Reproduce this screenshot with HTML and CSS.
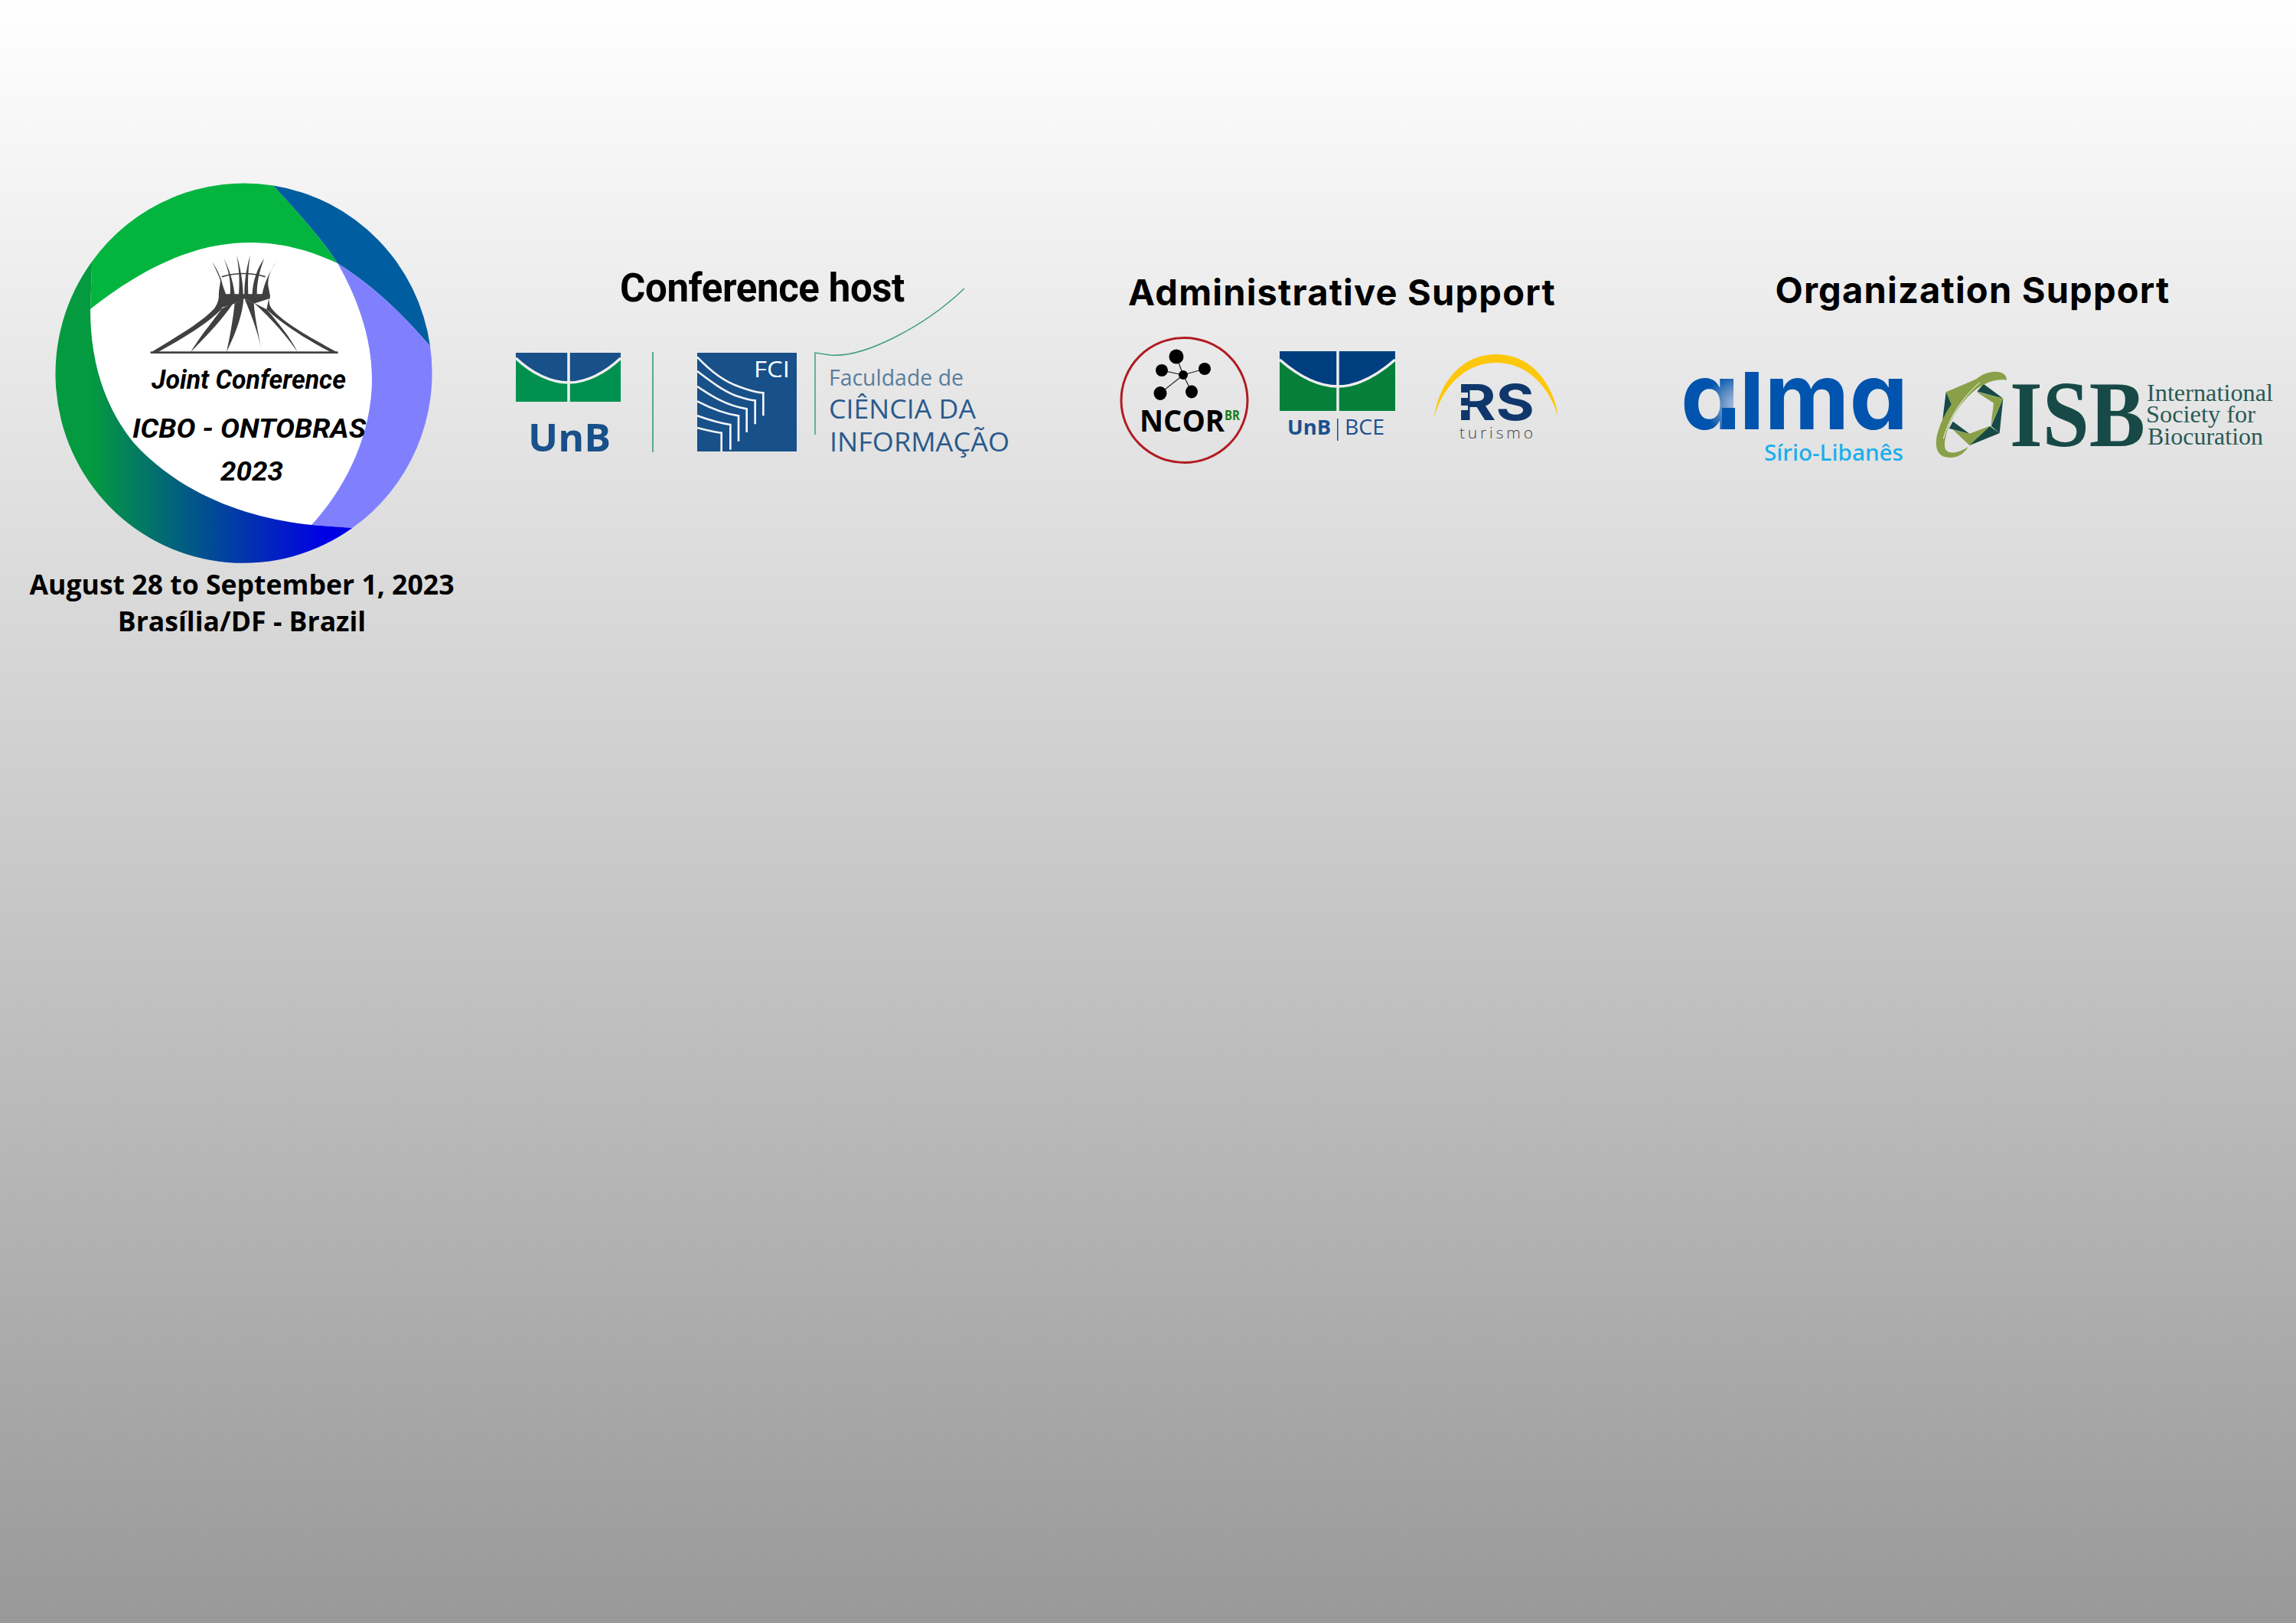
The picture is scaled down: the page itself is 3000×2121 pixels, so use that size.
FILE: index.html
```html
<!DOCTYPE html>
<html lang="en">

<head>
    <meta charset="UTF-8">
    <meta name="viewport" content="width=device-width, initial-scale=1.0">
    <title>ICBO - ONTOBRAS 2023</title>
    <link rel="stylesheet" href="styles.css">
</head>

<body>
    <main class="page">
        <section class="col col-event">
            <svg class="emblem" viewBox="70 235 500 500" width="500" height="500">
                <defs>
                    <linearGradient id="ringFade" gradientUnits="userSpaceOnUse" x1="118" y1="0" x2="425" y2="0">
                        <stop offset="0" stop-color="#049a3f" />
                        <stop offset="1" stop-color="#0000e6" />
                    </linearGradient>
                </defs>
                <circle class="fill-white" cx="319" cy="487" r="235" />
                <path class="ring-green" d="M118 404 L120.2 341.7 A245.5 247.5 0 0 1 357.2 242.5 C380 268 420 310 441 344 C400 325 365 317 326 317 C250 317 180 355 118 404 Z" />
                <path class="ring-blue" d="M357.2 242.5 A245.5 247.5 0 0 1 562 452 C525 410 490 375 441 344 C420 310 380 268 357.2 242.5 Z" />
                <path class="ring-violet" d="M441 344 C490 375 525 410 562 452 A245.5 247.5 0 0 1 460.3 690 L407 686 C450 640 486 570 486 495 C486 440 465 385 441 344 Z" />
                <path class="ring-fade" d="M120.2 341.7 A245.5 247.5 0 0 0 460.3 690 L407 686 C330 678 240 650 175 579 C135 530 118 470 118 404 Z" />

                <!-- catedral -->
                <g class="cathedral" transform="translate(190 325) scale(.3333)">
                    <rect x="20" y="403" width="735" height="8" />
                    <path d="M262 52 C285 88 298 118 302 140 C308 160 316 175 320 195 L288 195 C286 165 292 150 294 125 C288 105 275 80 262 52 Z" />
                    <path d="M306 36 C325 72 343 120 350 180 L332 180 C336 130 327 85 306 36 Z" />
                    <path d="M358 25 C370 70 382 120 383 180 L366 180 C371 120 366 75 358 25 Z" />
                    <path d="M411 25 C403 75 401 120 403 180 L388 180 C388 120 398 70 411 25 Z" />
                    <path d="M466 38 C447 85 437 130 437 180 L419 180 C420 125 440 75 466 38 Z" />
                    <path d="M512 52 C485 90 478 125 482 150 C486 165 488 180 488 195 L456 195 C460 160 470 120 512 52 Z" />
                    <path class="cathedral-ring" d="M300 110 Q385 85 470 110" />
                    <path d="M288 178 L488 178 L488 195 L425 215 L388 195 L350 215 L288 235 Z" />
                    <path d="M288 175 C290 190 285 215 270 235 C220 290 120 345 20 408 L45 408 C130 360 240 300 300 235 Z" />
                    <path d="M178 405 C240 340 300 280 345 212 L300 235 C260 290 210 350 178 405 Z" />
                    <path d="M318 405 C335 330 345 260 350 215 L385 195 C380 270 345 350 318 405 Z" />
                    <path d="M456 405 C445 340 420 270 388 195 L425 215 C430 280 445 340 456 405 Z" />
                    <path d="M596 405 C560 350 500 280 425 212 L475 238 C520 290 570 350 596 405 Z" />
                    <path d="M755 408 C640 345 540 290 495 235 C480 215 485 190 488 175 L475 238 C540 300 640 360 730 408 Z" />
                </g>

                <text class="emblem-text" x="198" y="508" textLength="254" lengthAdjust="spacingAndGlyphs">Joint Conference</text>
                <text class="emblem-text" x="173" y="571.5" textLength="305" lengthAdjust="spacingAndGlyphs">ICBO - ONTOBRAS</text>
                <text class="emblem-text" x="288" y="628" textLength="82" lengthAdjust="spacingAndGlyphs">2023</text>
            </svg>
            <p class="dates">August 28 to September 1, 2023<br>Brasília/DF - Brazil</p>
        </section>

        <section class="col col-host">
            <h2 class="title-host">Conference host</h2>
            <svg class="logo-host" viewBox="660 455 670 145" width="670" height="145">
                <!-- UnB -->
                <rect class="unb-green" x="674" y="461" width="137" height="64" />
                <path class="unb-blue" d="M674 461 H811 V468 C790 488 765 500 743 500 C720 500 695 488 674 468 Z" />
                <path class="flag-line" d="M674 468 C695 488 720 500 743 500 C765 500 790 488 811 468 M743 461 V525" />
                <text class="unb-text" x="690" y="590" textLength="108" lengthAdjust="spacingAndGlyphs">UnB</text>
                <rect class="host-rule" x="852" y="460" width="2" height="131" />

                <!-- FCI -->
                <rect class="unb-blue" x="911" y="461" width="130" height="129" />
                <g class="fci-lines" transform="translate(905 455) scale(.3333)">
                    <path d="M18 35 C70 90 120 130 180 150 C220 165 250 175 277 175 L277 265" />
                    <path d="M18 90 C70 130 130 175 180 190 C210 200 225 205 245 205 L245 298" />
                    <path d="M18 150 C70 185 130 225 212 238 L212 330" />
                    <path d="M18 208 C70 235 130 258 180 265 L180 365" />
                    <path d="M18 265 C60 280 110 295 148 300 L148 398" />
                    <path d="M18 312 C50 320 90 330 113 332 L113 405" />
                </g>
                <text class="fci-text" x="985" y="493" textLength="47" lengthAdjust="spacingAndGlyphs">FCI</text>
                <path class="host-curve" d="M1260 377 C1210 425 1130 468 1085 464 L1065 461 V568" />
                <text class="fac-small" x="1083" y="504" textLength="176" lengthAdjust="spacingAndGlyphs">Faculdade de</text>
                <text class="fac-big" x="1083" y="547" textLength="192" lengthAdjust="spacingAndGlyphs">CIÊNCIA DA</text>
                <text class="fac-big" x="1084" y="590" textLength="235" lengthAdjust="spacingAndGlyphs">INFORMAÇÃO</text>
            </svg>
        </section>

        <section class="col col-admin">
            <h2 class="title">Administrative Support</h2>
            <div class="logos logos-admin">
                <svg viewBox="1463 440 169 166" width="169" height="166">
                    <ellipse class="ncor-ring" cx="1547.5" cy="523" rx="82.5" ry="81.5" />
                    <path class="ncor-links" d="M1537 466 L1546 490 M1518 484 L1546 490 M1574 482 L1546 490 M1516 514 L1546 490 M1557 512 L1546 490" />
                    <ellipse cx="1537" cy="466" rx="9.5" ry="9.5" />
                    <ellipse cx="1518" cy="484" rx="8" ry="8" />
                    <ellipse cx="1574" cy="482" rx="8" ry="8" />
                    <ellipse cx="1546" cy="490" rx="6" ry="6" />
                    <ellipse cx="1516" cy="514" rx="8.5" ry="9" />
                    <ellipse cx="1557" cy="512" rx="8" ry="8.5" />
                    <text class="ncor-text" x="1489" y="564" textLength="111" lengthAdjust="spacingAndGlyphs">NCOR</text>
                    <text class="ncor-br" x="1600" y="549" textLength="20" lengthAdjust="spacingAndGlyphs">BR</text>
                </svg>
                <svg viewBox="1672 455 151 125" width="151" height="125">
                    <rect class="bce-green" x="1672" y="459" width="151" height="78" />
                    <path class="bce-blue" d="M1672 459 H1823 V470 C1800 490 1775 505 1748 505 C1720 505 1695 490 1672 470 Z" />
                    <path class="flag-line" d="M1672 470 C1695 490 1720 505 1748 505 C1775 505 1800 490 1823 470 M1748 459 V537" />
                    <text class="bce-unb" x="1682" y="568" textLength="57" lengthAdjust="spacingAndGlyphs">UnB</text>
                    <rect class="bce-rule" x="1747" y="547" width="1.5" height="29" />
                    <text class="bce-name" x="1757" y="568" textLength="52" lengthAdjust="spacingAndGlyphs">BCE</text>
                </svg>
                <svg viewBox="1863 455 182 125" width="182" height="125">
                    <path class="rs-arc" d="M1873.5 546 C1880 500 1910 463 1955 463 C2000 463 2030 500 2036 546 C2025 505 1995 474 1955 474 C1915 474 1885 505 1873.5 546 Z" />
                    <text class="rs-text" x="1904" y="549" textLength="101" lengthAdjust="spacingAndGlyphs">RS</text>
                    <rect class="rs-gap" x="1902" y="513" width="16" height="7" />
                    <rect class="rs-gap" x="1902" y="530" width="16" height="6" />
                    <text class="rs-sub" x="1907" y="573" textLength="96" lengthAdjust="spacing">turismo</text>
                </svg>
            </div>
        </section>

        <section class="col col-org">
            <h2 class="title">Organization Support</h2>
            <div class="logos logos-org">
                <svg viewBox="2200 480 290 130" width="290" height="130">
                    <defs>
                        <radialGradient id="almaFade" gradientUnits="userSpaceOnUse" cx="2272" cy="530" r="44">
                            <stop offset="0" stop-color="#b9cbe2" />
                            <stop offset=".45" stop-color="#6f97c8" />
                            <stop offset="1" stop-color="#0054ad" />
                        </radialGradient>
                        <clipPath id="almaClip">
                            <rect x="2190" y="486" width="310" height="90" />
                        </clipPath>
                    </defs>
                    <g clip-path="url(#almaClip)">
                        <text class="alma-text" x="2196" y="561" textLength="297" lengthAdjust="spacingAndGlyphs"><tspan fill="url(#almaFade)">a</tspan>lma</text>
                    </g>
                    <rect class="alma-solid" x="2250" y="533" width="17" height="28" />
                    <text class="alma-sub" x="2305" y="601.5" textLength="182" lengthAdjust="spacingAndGlyphs">Sírio-Libanês</text>
                </svg>
                <svg viewBox="2528 480 447 125" width="447" height="125">
                    <g transform="translate(2520 480) scale(.3333)">
                        <path class="isb-dark" d="M68 97 L100 165 L52 228 Z" />
                        <path class="isb-olive" d="M68 97 L190 45 L110 125 L100 170 Z" />
                        <path class="isb-dark" d="M215 65 L292 122 L190 95 Z" />
                        <path class="isb-olive" d="M188 97 L292 122 L244 228 L255 140 Z" />
                        <path class="isb-dark" d="M292 122 L278 258 L245 230 Z" />
                        <path class="isb-olive" d="M278 258 L160 306 L96 245 L160 260 L240 230 Z" />
                        <path class="isb-dark" d="M240 232 L278 258 L160 306 Z" />
                        <path class="isb-dark" d="M95 212 L160 260 L80 240 Z" />
                        <path class="isb-olive" d="M306 50 C305 15 260 8 210 30 C130 80 55 170 32 270 C20 335 50 365 110 350 C130 344 145 328 155 312 C120 335 80 345 65 320 C55 290 80 215 110 170 C160 95 230 40 306 50 Z" />
                        <path class="isb-edge" d="M58 280 C80 200 130 120 200 60" />
                    </g>
                    <text class="isb-text" x="2626" y="583" textLength="177" lengthAdjust="spacingAndGlyphs">ISB</text>
                    <text class="isb-sub" x="2805" y="524" textLength="165" lengthAdjust="spacingAndGlyphs">International</text>
                    <text class="isb-sub" x="2804" y="552" textLength="143" lengthAdjust="spacingAndGlyphs">Society for</text>
                    <text class="isb-sub" x="2806" y="581" textLength="151" lengthAdjust="spacingAndGlyphs">Biocuration</text>
                </svg>
            </div>
        </section>
    </main>
</body>

</html>
```

FILE: styles.css
```css
* {
    box-sizing: border-box;
    margin: 0;
    padding: 0;
}

body {
    background: linear-gradient(#ffffff, #999999);
    height: 2121px;
    overflow: hidden;
    font-family: "Open Sans", sans-serif;
    color: #000000;
}

svg {
    display: block;
    overflow: visible;
}

.page {
    display: flex;
    align-items: flex-start;
}

.col-event {
    width: 632px;
    padding-top: 235px;
}

.emblem {
    margin-left: 70px;
}

.dates {
    font-weight: 700;
    font-size: 35.6px;
    line-height: 47.6px;
    text-align: center;
    margin-top: 5px;
}

.col-host {
    width: 688px;
    margin-left: 20px;
    padding-top: 347px;
}

.title-host {
    font-family: Roboto, sans-serif;
    font-weight: 700;
    font-size: 51px;
    line-height: 60px;
    text-align: center;
    letter-spacing: -0.4px;
}

.logo-host {
    margin-top: 48px;
    margin-left: 8px;
}

.col-admin {
    width: 613px;
    margin-left: 107px;
    padding-top: 352px;
}

.col-org {
    width: 805px;
    margin-left: 115px;
    padding-top: 349px;
}

.title {
    font-family: Inter, sans-serif;
    font-weight: 700;
    font-size: 47px;
    line-height: 60px;
    letter-spacing: 1.2px;
    text-align: center;
}

.logos {
    display: flex;
    align-items: flex-start;
}

.logos-admin {
    margin-top: 28px;
    padding-left: 16px;
    gap: 40px;
}

.logos-admin svg:nth-child(n+2) {
    margin-top: 15px;
}

.logos-org {
    margin-top: 71px;
    padding-left: 25px;
    gap: 38px;
}

/* emblema */
.fill-white { fill: #ffffff; }
.ring-green { fill: #03b53f; }
.ring-blue { fill: #005da0; }
.ring-violet { fill: #8080ff; }
.ring-fade { fill: url(#ringFade); }
.cathedral { fill: #404040; }
.cathedral-ring { fill: none; stroke: #404040; stroke-width: 5; }

.emblem-text {
    font-family: Roboto, sans-serif;
    font-style: italic;
    font-weight: 700;
    font-size: 35px;
}

/* UnB / FCI */
.unb-green { fill: #009150; }
.unb-blue { fill: #185089; }
.flag-line { fill: none; stroke: #eeeeee; stroke-width: 3.5; }
.unb-text {
    font-family: "Open Sans", sans-serif;
    font-weight: 700;
    font-size: 50px;
    fill: #185089;
}
.host-rule { fill: #5ba88a; }
.fci-lines { fill: none; stroke: #f2f5f8; stroke-width: 8; }
.fci-text {
    font-family: "Open Sans", sans-serif;
    font-weight: 400;
    font-size: 29px;
    fill: #ffffff;
}
.host-curve { fill: none; stroke: #3f9f78; stroke-width: 1.5; }
.fac-small {
    font-family: "Open Sans", sans-serif;
    font-weight: 400;
    font-size: 29px;
    fill: #5a7d9e;
}
.fac-big {
    font-family: "Open Sans", sans-serif;
    font-weight: 400;
    font-size: 35px;
    fill: #2a5a8c;
}

/* NCOR */
.ncor-ring { fill: none; stroke: #b01c22; stroke-width: 3; }
.ncor-links { fill: none; stroke: #222222; stroke-width: 1.2; }
.ncor-text {
    font-family: "Open Sans", sans-serif;
    font-weight: 700;
    font-size: 39px;
}
.ncor-br {
    font-family: "Open Sans", sans-serif;
    font-weight: 700;
    font-size: 18px;
    fill: #1f7a12;
}

/* BCE */
.bce-green { fill: #05803a; }
.bce-blue { fill: #003f7f; }
.bce-unb {
    font-family: "Open Sans", sans-serif;
    font-weight: 700;
    font-size: 27px;
    fill: #1b4f8f;
}
.bce-rule { fill: #1b4f8f; }
.bce-name {
    font-family: "Open Sans", sans-serif;
    font-weight: 400;
    font-size: 27px;
    fill: #1b4f8f;
}

/* RS */
.rs-arc { fill: #fdc70c; }
.rs-text {
    font-family: Inter, sans-serif;
    font-weight: 700;
    font-size: 65px;
    fill: #10376b;
}
.rs-gap { fill: #e3e3e3; }
.rs-sub {
    font-family: "Open Sans", sans-serif;
    font-weight: 300;
    font-size: 21px;
    fill: #444444;
}

/* alma */
.alma-text {
    font-family: Inter, sans-serif;
    font-weight: 700;
    font-size: 121px;
    font-feature-settings: "cv11";
    fill: #0054ad;
}
.alma-solid { fill: #0054ad; }
.alma-sub {
    font-family: "Noto Sans", sans-serif;
    font-weight: 500;
    font-size: 29px;
    fill: #1aaeed;
}

/* ISB */
.isb-dark { fill: #174a47; }
.isb-olive { fill: #8aa048; }
.isb-edge { fill: none; stroke: #ffffff; stroke-width: 3; }
.isb-text {
    font-family: "Liberation Serif", serif;
    font-weight: 700;
    font-size: 122px;
    fill: #174a47;
}
.isb-sub {
    font-family: "Liberation Serif", serif;
    font-size: 31px;
    fill: #2a5a56;
}
```
